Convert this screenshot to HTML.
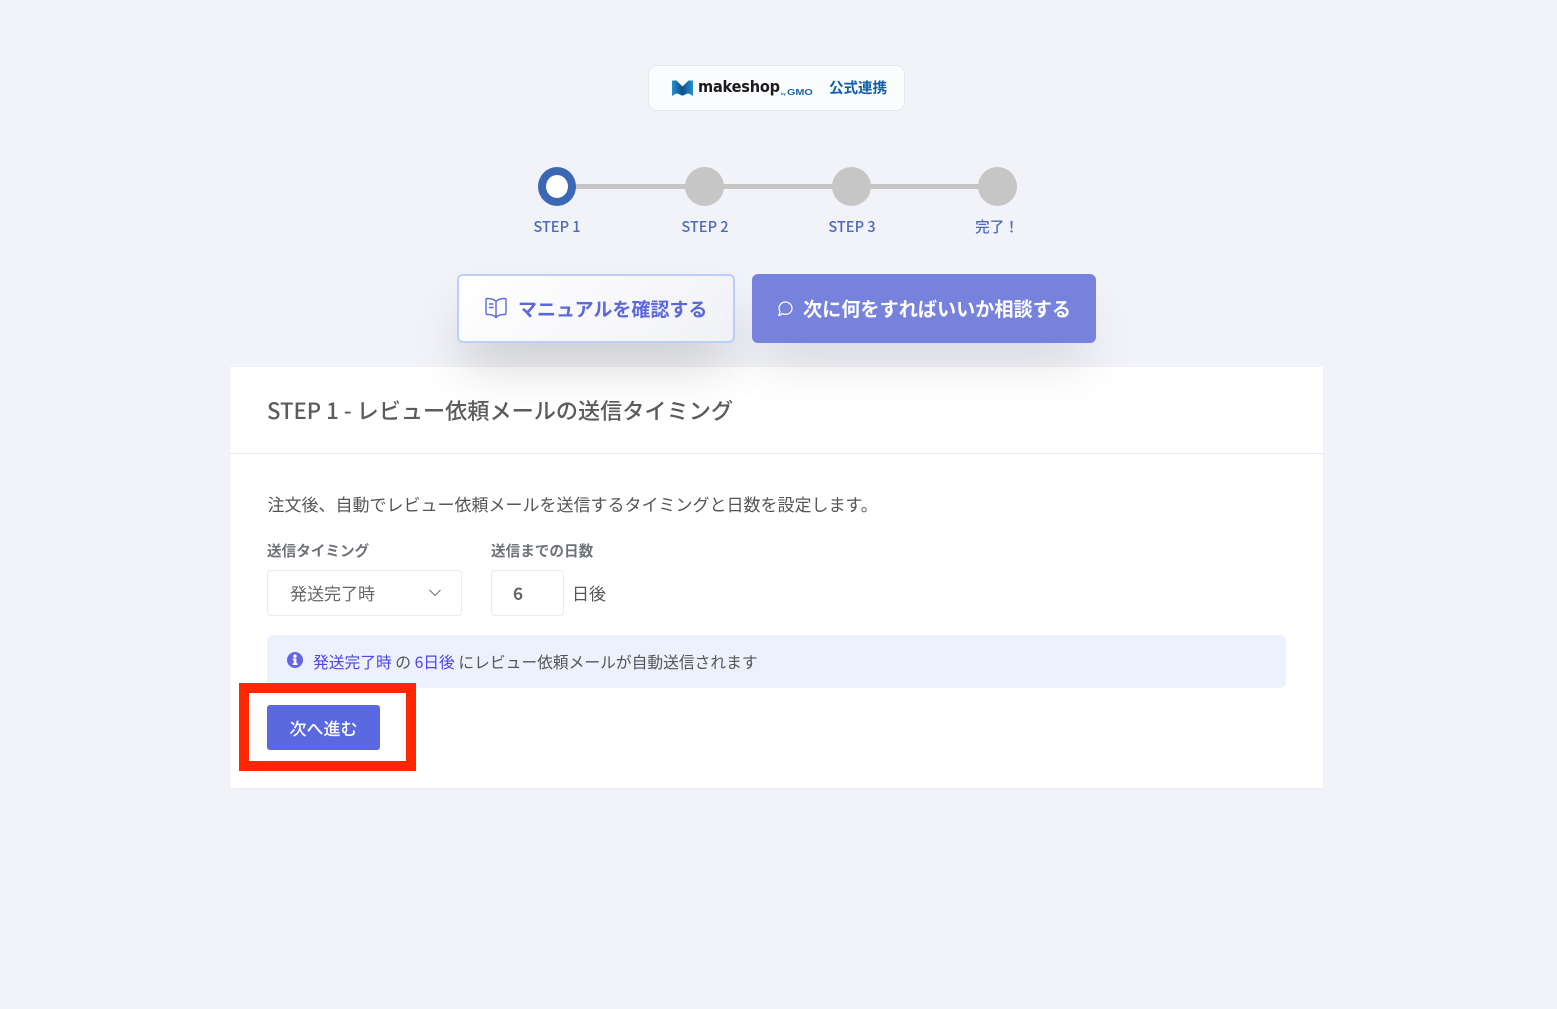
<!DOCTYPE html>
<html lang="ja">
<head>
<meta charset="utf-8">
<title>STEP 1</title>
<style>
html,body{margin:0;padding:0;width:1557px;height:1009px;overflow:hidden;background:#f2f3f8}
body{position:relative;font-family:"Noto Sans CJK JP","Liberation Sans",sans-serif;color:#5f5f5f}
.a{position:absolute;white-space:nowrap}
.logo{left:648px;top:65px;width:255px;height:44px;background:#fbfcfe;border:1px solid #e6e8f0;border-radius:8px}
.line{left:557px;top:183.5px;width:440px;height:5px;background:#c6c6c6}
.dot{top:167px;width:39px;height:39px;border-radius:50%;background:#c6c6c6}
.step{top:218px;font-size:14.6px;line-height:18px;font-weight:500;color:#4f69b5;text-align:center;width:100px}
.btn{top:274px;height:69px;border-radius:6px;box-sizing:border-box;font-size:18px;font-weight:700;z-index:3}
.card{left:230px;top:367px;width:1093px;height:421px;background:#fff;box-shadow:0 1px 3px rgba(0,0,0,.03)}
</style>
</head>
<body>
<div class="a logo"></div>
<svg class="a" style="left:672px;top:80px" width="22" height="17" viewBox="0 0 22 17"><defs><linearGradient id="g" x1="0" y1="0" x2="1" y2="0"><stop offset="0" stop-color="#2a8fd0"/><stop offset=".5" stop-color="#0c4f8c"/><stop offset="1" stop-color="#2a8fd0"/></linearGradient></defs><path d="M0 .5L4.500 .5L10.500 6.500L16.500 .5L21 .5V16C19 15 17.500 13.500 16 13.500C14 13.500 12.500 15.500 10.500 15.500C8.500 15.500 7 13.500 5 13.500C3.500 13.500 2 15 0 16Z" fill="url(#g)"/></svg>
<div class="a" style="left:698px;top:77px;font:700 16px/20px 'DejaVu Sans',sans-serif;color:#1b1b1f;letter-spacing:-.25px;transform:scaleX(.91);transform-origin:left">makeshop</div>
<div class="a" style="left:781px;top:88px;font:700 8px/10px 'Liberation Sans',sans-serif;color:#1b66a8;letter-spacing:0"><span style="font-size:4px">by</span><span style="display:inline-block;transform:scaleX(1.35);transform-origin:left;margin-left:1px">GMO</span></div>
<div class="a" style="left:829px;top:78px;font-size:14.5px;line-height:20px;font-weight:700;color:#0d5ea8">公式連携</div>

<div class="a line"></div>
<div class="a dot" style="left:538px;width:38px;background:#fff;border:8.500px solid #3b68b5;box-sizing:border-box"></div>
<div class="a dot" style="left:685px"></div>
<div class="a dot" style="left:832px"></div>
<div class="a dot" style="left:978px"></div>
<div class="a step" style="left:507px">STEP 1</div>
<div class="a step" style="left:655px">STEP 2</div>
<div class="a step" style="left:802px">STEP 3</div>
<div class="a step" style="left:947px">完了！</div>

<div class="a card"></div>
<div class="a btn" style="left:457px;width:278px;background:linear-gradient(135deg,#fff,#f1f2f7);border:2px solid #bcd0f7;box-shadow:0 30px 50px -8px rgba(0,0,0,.17);color:#5b68dc">
 <svg class="a" style="left:25px;top:21px" width="24" height="22" viewBox="0 0 24 22" fill="none" stroke="#5b68dc" stroke-width="1.400" stroke-linejoin="round" stroke-linecap="round"><path d="M12 4.500C10.500 2.500 7 1.500 3 1.500C2.400 1.500 2 2 2 2.500V16C2 17 2.500 17.500 3.500 17.500C7 17.500 10.500 18.500 12 20.500C13.500 18.500 17 17.500 20.500 17.500C21.500 17.500 22 17 22 16V2.500C22 2 21.600 1.500 21 1.500C17 1.500 13.500 2.500 12 4.500ZM12 4.500V20.500M5.500 7H9M5.500 10.500H9"/></svg>
 <span class="a" style="left:59px;top:21px;line-height:24px;font-size:19px;font-weight:700">マニュアルを確認する</span>
</div>
<div class="a btn" style="left:752px;width:344px;background:#7782dc;box-shadow:0 30px 50px -8px rgba(0,0,0,.1);color:#fff">
 <svg class="a" style="left:25px;top:26px" width="17" height="17" viewBox="0 0 17 17" fill="none" stroke="#fff" stroke-width="1.300" stroke-linejoin="round"><path d="M1.800 15.500L3 11.500C2.300 10.500 2 9.400 2 8.300C2 5 4.800 2 8.500 2C12.200 2 15 5 15 8.300C15 11.600 12.200 14.300 8.500 14.300C7.500 14.300 6.500 14.100 5.700 13.700Z"/></svg>
 <span class="a" style="left:51px;top:22px;line-height:24px;font-size:19.15px;font-weight:700">次に何をすればいいか相談する</span>
</div>

<div class="a" style="left:267px;top:394px;font-size:22.15px;line-height:33px;font-weight:500;color:#5c5c60">STEP 1 - レビュー依頼メールの送信タイミング</div>
<div class="a" style="left:230px;top:453px;width:1093px;height:1px;background:#e9e9ee"></div>
<div class="a" style="left:267.500px;top:491px;font-size:17px;line-height:25px;color:#555">注文後、自動でレビュー依頼メールを送信するタイミングと日数を設定します。</div>

<div class="a" style="left:267px;top:541px;font-size:14.6px;line-height:20px;font-weight:700;color:#6f7379">送信タイミング</div>
<div class="a" style="left:491px;top:541px;font-size:14.6px;line-height:20px;font-weight:700;color:#6f7379">送信までの日数</div>
<div class="a" style="left:267px;top:570px;width:195px;height:46px;box-sizing:border-box;background:#fff;border:1px solid #e8eaee;border-radius:4px"></div>
<div class="a" style="left:290px;top:580px;font-size:17px;line-height:25px;color:#666">発送完了時</div>
<svg class="a" style="left:428px;top:588px" width="14" height="10" viewBox="0 0 14 10" fill="none" stroke="#6b6f76" stroke-width="1"><path d="M1.500 2L7 7.500L12.500 2"/></svg>
<div class="a" style="left:491px;top:570px;width:73px;height:46px;box-sizing:border-box;background:#fff;border:1px solid #e8eaee;border-radius:4px"></div>
<div class="a" style="left:513px;top:580px;font-size:17px;line-height:25px;font-weight:700;color:#666">6</div>
<div class="a" style="left:572px;top:580px;font-size:17px;line-height:25px;color:#555">日後</div>

<div class="a" style="left:267px;top:635px;width:1019px;height:53px;background:#edf1fd;border-radius:6px"></div>
<svg class="a" style="left:287px;top:652px" width="16" height="16" viewBox="0 0 16 16"><circle cx="8" cy="8" r="8" fill="#6366e8"/><path d="M5.800 6.500H9.400V11.300H10.500V13H5.600V11.300H6.800V8.200H5.800Z" fill="#fff"/><circle cx="8" cy="4.200" r="1.700" fill="#fff"/></svg>
<div class="a" style="left:313px;top:650px;font-size:15.75px;line-height:24px;color:#555"><span style="color:#4f46e5">発送完了時</span> の <span style="color:#4f46e5">6日後</span> にレビュー依頼メールが自動送信されます</div>

<div class="a" style="left:239px;top:683px;width:177px;height:88px;box-sizing:border-box;border:10px solid #ff2600"></div>
<div class="a" style="left:267px;top:705px;width:113px;height:45px;background:#5a69e0;border-radius:3px;color:#fff;font-size:17px;line-height:45px;font-weight:500;text-align:center">次へ進む</div>
</body>
</html>
